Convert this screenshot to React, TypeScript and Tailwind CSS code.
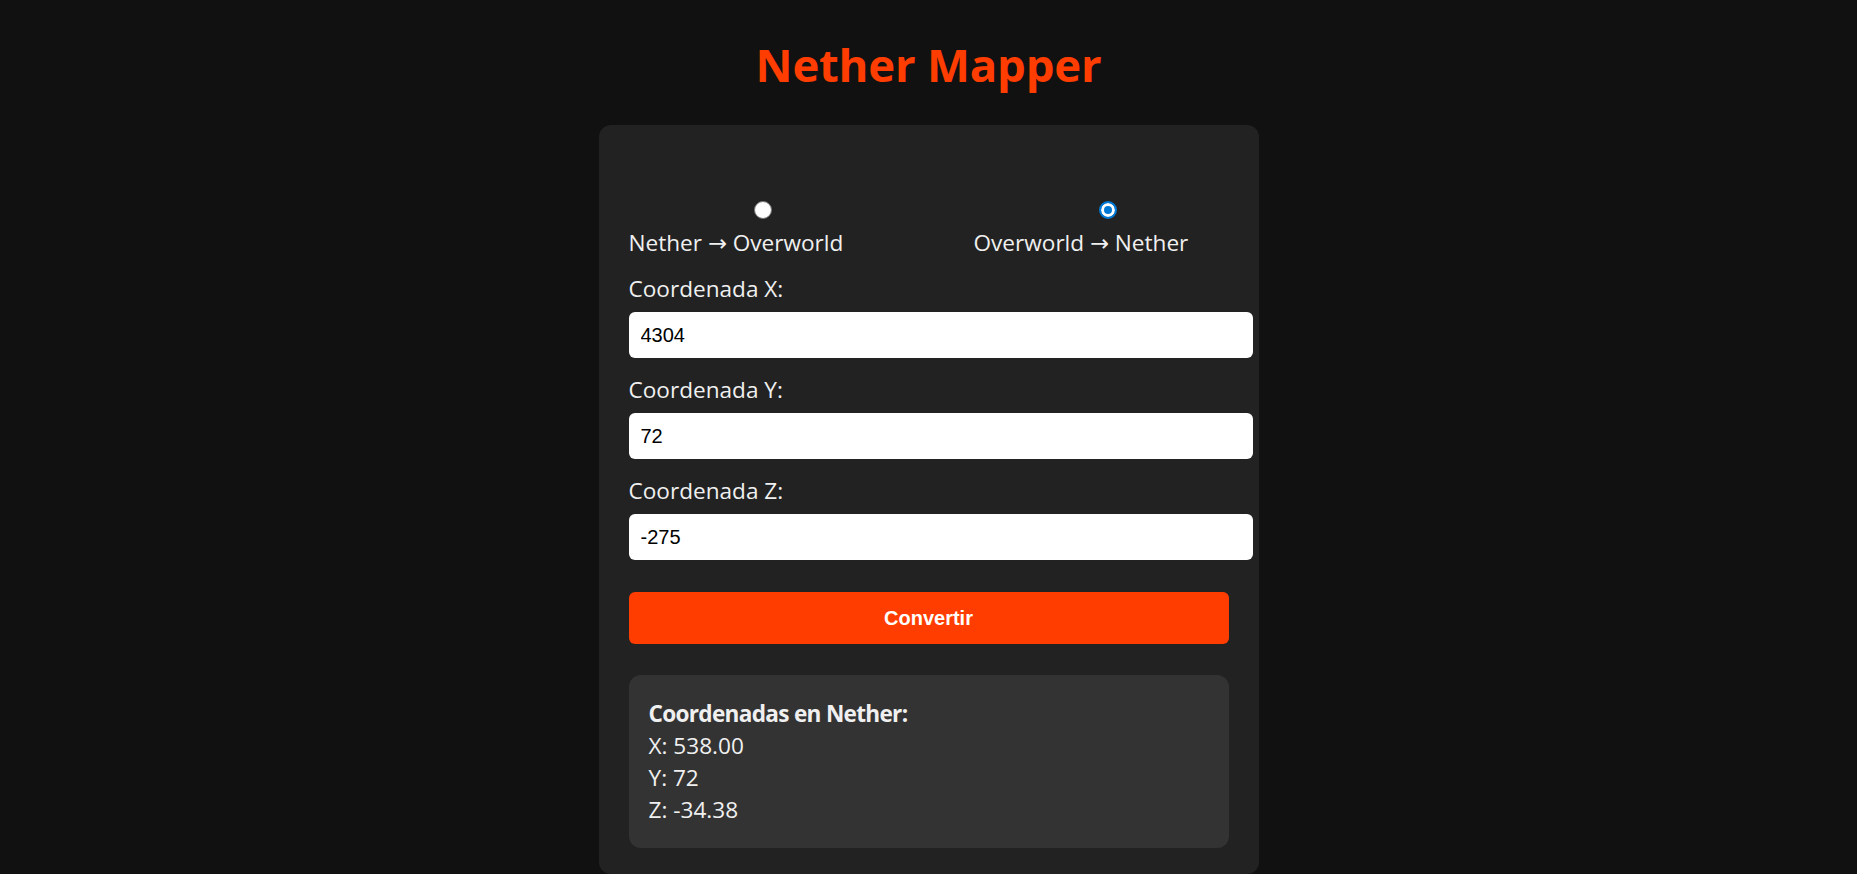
import { useState } from "react";

const body = "font-['Open_Sans','Noto_Sans','DejaVu_Sans',sans-serif]";

function Radio({ checked, onChange }: { checked: boolean; onChange: () => void }) {
  return (
    <input
      type="radio"
      name="modo"
      checked={checked}
      onChange={onChange}
      className={
        checked
          ? "appearance-none block w-[18px] h-[18px] rounded-full border-2 border-[#0078d4] bg-[#0078d4] shadow-[inset_0_0_0_3px_#ffffff]"
          : "appearance-none block w-[18px] h-[18px] rounded-full border border-[#767676] bg-white"
      }
    />
  );
}

function Field({ label, value }: { label: string; value: string }) {
  return (
    <div className="flex flex-col mb-[16px]">
      <label className="text-[22.6px] leading-[32px] text-[#f0f0f0] mb-[7px]">{label}</label>
      <input
        type="text"
        defaultValue={value}
        className="w-[624px] h-[46px] rounded-[6px] bg-white px-[12px] text-[20px] text-black font-['Liberation_Sans',Arial,sans-serif] outline-none"
      />
    </div>
  );
}

export default function App() {
  const [mode, setMode] = useState<"n2o" | "o2n">("o2n");

  return (
    <div className={`min-h-screen bg-[#111111] flex flex-col items-center pt-[32px] ${body}`}>
      <h1 className="text-[45.5px] leading-[64px] font-bold text-[#ff3d00] tracking-[-0.2px]">Nether Mapper</h1>

      <div className="mt-[29px] w-[660px] bg-[#222222] rounded-[12px] px-[30px] pt-[76px] pb-[26px]">
        <div className="flex mb-[14px]">
          <label className="w-[268px] flex flex-col shrink-0">
            <span className="flex justify-center mb-[8px]">
              <Radio checked={mode === "n2o"} onChange={() => setMode("n2o")} />
            </span>
            <span className="text-[22.6px] leading-[32px] text-[#f0f0f0] whitespace-nowrap">
              Nether → Overworld
            </span>
          </label>
          <label className="w-[268px] ml-[77px] flex flex-col shrink-0">
            <span className="flex justify-center mb-[8px]">
              <Radio checked={mode === "o2n"} onChange={() => setMode("o2n")} />
            </span>
            <span className="text-[22.6px] leading-[32px] text-[#f0f0f0] whitespace-nowrap">
              Overworld → Nether
            </span>
          </label>
        </div>

        <Field label="Coordenada X:" value="4304" />
        <Field label="Coordenada Y:" value="72" />
        <Field label="Coordenada Z:" value="-275" />

        <button className="mt-[16px] w-full h-[52px] rounded-[6px] bg-[#ff3d00] text-white text-[20px] font-bold font-['Liberation_Sans',Arial,sans-serif]">
          Convertir
        </button>

        <div className="mt-[31px] bg-[#333333] rounded-[12px] pl-[20px] pr-[20px] pt-[23px] pb-[22px] text-[22.6px] leading-[32px] text-[#f0f0f0]">
          <div className="font-bold tracking-[-0.7px]">Coordenadas en Nether:</div>
          <div>X: 538.00</div>
          <div>Y: 72</div>
          <div>Z: -34.38</div>
        </div>
      </div>
    </div>
  );
}
